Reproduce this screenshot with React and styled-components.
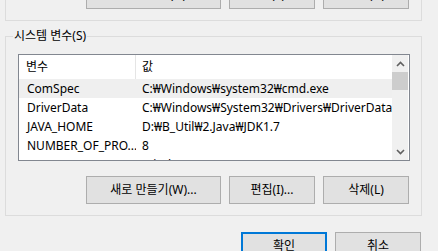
import React from "react";
import styled, { createGlobalStyle } from "styled-components";

const Global = createGlobalStyle`
  html, body { margin: 0; padding: 0; background: #f0f0f0; }
  body {
    font-family: "Noto Sans", "Noto Sans CJK KR", sans-serif;
    font-size: 12px;
    color: #000;
  }
`;

const Page = styled.div`
  width: 438px;
  height: 251px;
  overflow: hidden;
  box-sizing: border-box;
  padding: 0 17px 0 5px;
  display: flex;
  flex-direction: column;
`;

const Group = styled.div`
  position: relative;
  width: 417px;
  box-sizing: border-box;
  border: 1px solid #dcdcdc;
  padding: ${(p) => p.$pad};
  margin-top: ${(p) => p.$mt};
  display: flex;
  flex-direction: column;
`;

const Legend = styled.span`
  position: absolute;
  left: 7px;
  top: -10px;
  line-height: 18px;
  padding: 0 1px;
  background: #f0f0f0;
  white-space: nowrap;
`;

const ButtonRow = styled.div`
  display: flex;
  justify-content: flex-end;
  gap: 8px;
  padding-right: ${(p) => p.$pr || "0px"};
  margin-top: ${(p) => p.$mt || "0px"};
`;

const Button = styled.button`
  width: ${(p) => p.$w}px;
  height: 28px;
  box-sizing: border-box;
  margin: 0;
  padding: 0;
  border: ${(p) => (p.$default ? "2px solid #0078d7" : "1px solid #adadad")};
  background: #e1e1e1;
  font-family: "Noto Sans", "Noto Sans CJK KR", sans-serif;
  font-size: 12px;
  color: #000;
  line-height: 1;
  display: flex;
  align-items: center;
  justify-content: center;
  white-space: nowrap;
`;

const List = styled.div`
  height: 107px;
  box-sizing: border-box;
  border: 1px solid #828790;
  background: #fff;
  display: flex;
  overflow: hidden;
`;

const Table = styled.div`
  flex: 1;
  min-width: 0;
  overflow: hidden;
`;

const Header = styled.div`
  height: 24px;
  display: flex;
  align-items: center;
`;

const HeadCell = styled.div`
  box-sizing: border-box;
  width: ${(p) => (p.$first ? "117px" : "auto")};
  flex: ${(p) => (p.$first ? "none" : "1")};
  height: 24px;
  line-height: 24px;
  padding-left: ${(p) => (p.$first ? "7px" : "6px")};
  border-right: ${(p) => (p.$first ? "1px solid #e5e5e5" : "none")};
`;

const Row = styled.div`
  height: 19px;
  display: flex;
  align-items: center;
  background: ${(p) => (p.$selected ? "#efefef" : "transparent")};
`;

const Cell = styled.div`
  box-sizing: border-box;
  width: ${(p) => (p.$first ? "117px" : "auto")};
  flex: ${(p) => (p.$first ? "none" : "1")};
  padding-left: ${(p) => (p.$first ? "8px" : "6px")};
  white-space: nowrap;
  overflow: hidden;
  line-height: 19px;
`;

const Scrollbar = styled.div`
  width: 16px;
  margin-right: 1px;
  background: #f0f0f0;
  display: flex;
  flex-direction: column;
  flex: none;
`;

const Arrow = styled.div`
  height: 17px;
  display: flex;
  align-items: center;
  justify-content: center;
  flex: none;
`;

const Track = styled.div`
  flex: 1;
`;

const Thumb = styled.div`
  height: 18px;
  background: #cdcdcd;
`;

const Chevron = ({ up }) => (
  <svg width="9" height="6" viewBox="0 0 9 6">
    <path
      d={up ? "M1 5 L4.5 1.5 L8 5" : "M1 1 L4.5 4.5 L8 1"}
      fill="none"
      stroke="#606060"
      strokeWidth="1.6"
    />
  </svg>
);

const rows = [
  ["ComSpec", "C:₩Windows₩system32₩cmd.exe", true],
  ["DriverData", "C:₩Windows₩System32₩Drivers₩DriverData"],
  ["JAVA_HOME", "D:₩B_Util₩2.Java₩JDK1.7"],
  ["NUMBER_OF_PRO...", "8"],
  ["OS", "Windows_NT"],
];

export default function App() {
  return (
    <>
      <Global />
      <Page>
        <Group $mt="-40px" $pad="20px 12px 11px 12px">
          <ButtonRow $pr="0px">
            <Button $w={135}>새로 만들기(N)...</Button>
            <Button $w={86}>편집(E)...</Button>
            <Button $w={86}>삭제(D)</Button>
          </ButtonRow>
        </Group>
        <Group $mt="15px" $pad="17px 11px 11px 12px">
          <Legend>시스템 변수(S)</Legend>
          <List>
            <Table>
              <Header>
                <HeadCell $first>변수</HeadCell>
                <HeadCell>값</HeadCell>
              </Header>
              {rows.map(([k, v, sel]) => (
                <Row key={k} $selected={sel}>
                  <Cell $first>{k}</Cell>
                  <Cell>{v}</Cell>
                </Row>
              ))}
            </Table>
            <Scrollbar>
              <Arrow>
                <Chevron up />
              </Arrow>
              <Thumb />
              <Track />
              <Arrow>
                <Chevron />
              </Arrow>
            </Scrollbar>
          </List>
          <ButtonRow $pr="1px" $mt="15px">
            <Button $w={135}>새로 만들기(W)...</Button>
            <Button $w={86}>편집(I)...</Button>
            <Button $w={86}>삭제(L)</Button>
          </ButtonRow>
        </Group>
        <ButtonRow $mt="16px">
          <Button $w={86} $default>확인</Button>
          <Button $w={86}>취소</Button>
        </ButtonRow>
      </Page>
    </>
  );
}
